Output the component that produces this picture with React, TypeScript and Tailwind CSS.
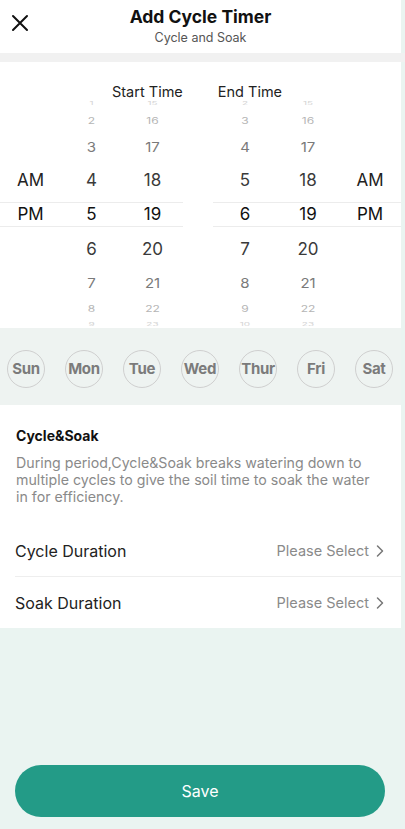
import React from "react";

type Row = { h: number; size: number; color: string; scale: string };

const ROWS: Row[] = [
  { h: 14, size: 10, color: "text-[#d4d4d4]", scale: "scale-y-[0.45]" },
  { h: 21, size: 12, color: "text-[#b5b5b5]", scale: "scale-y-[0.7]" },
  { h: 32, size: 15, color: "text-[#7a7a7a]", scale: "scale-y-[0.9]" },
  { h: 34, size: 17, color: "text-[#3a3a3a]", scale: "scale-y-100" },
  { h: 34, size: 17, color: "text-[#111]", scale: "scale-y-100" },
  { h: 36, size: 17, color: "text-[#3a3a3a]", scale: "scale-y-100" },
  { h: 32, size: 15, color: "text-[#7a7a7a]", scale: "scale-y-[0.9]" },
  { h: 20, size: 12, color: "text-[#b5b5b5]", scale: "scale-y-[0.7]" },
  { h: 9, size: 10, color: "text-[#d4d4d4]", scale: "scale-y-[0.45]" },
];

const sizeCls: Record<number, string> = {
  10: "text-[10px]",
  12: "text-[12px]",
  15: "text-[15px]",
  17: "text-[17px]",
};

function Wheel({ items, width }: { items: string[]; width: string }) {
  return (
    <div className={`flex flex-col ${width}`}>
      {ROWS.map((r, i) => (
        <div
          key={i}
          style={{ height: r.h }}
          className="flex items-center justify-center overflow-hidden"
        >
          <span className={`${sizeCls[r.size]} ${r.color} ${r.scale} leading-none`}>
            {items[i]}
          </span>
        </div>
      ))}
    </div>
  );
}

function AmPm({ width }: { width: string }) {
  return (
    <div className={`flex flex-col ${width}`}>
      <div className="h-[67px]" />
      <div className="h-[34px] flex items-center justify-center text-[17px] text-[#222] leading-none">AM</div>
      <div className="h-[34px] flex items-center justify-center text-[17px] text-[#111] leading-none">PM</div>
    </div>
  );
}

const days = ["Sun", "Mon", "Tue", "Wed", "Thur", "Fri", "Sat"];

function Chevron() {
  return (
    <svg className="ml-[7px] mr-[17px]" width="8" height="14" viewBox="0 0 8 14" fill="none" stroke="#777" strokeWidth="1.5" strokeLinecap="round" strokeLinejoin="round">
      <path d="M1.5 2 L6.5 7 L1.5 12" />
    </svg>
  );
}

export default function App() {
  return (
    <div
      className="w-[405px] h-[829px] bg-[#eaf4f1] flex flex-col overflow-hidden"
      style={{ fontFamily: "Inter, 'Noto Sans', sans-serif" }}
    >
      {/* Header */}
      <div className="h-[53px] bg-white mr-[4px] relative flex flex-col items-center">
        <svg
          className="absolute left-[11px] top-[14px]"
          width="18"
          height="18"
          viewBox="0 0 18 18"
          fill="none"
          stroke="#111"
          strokeWidth="2"
          strokeLinecap="round"
        >
          <path d="M2 2 L16 16 M16 2 L2 16" />
        </svg>
        <div className="mt-[5px] text-[17.5px] font-bold text-[#111] leading-[24px]">Add Cycle Timer</div>
        <div className="mt-[1px] text-[12.5px] text-[#555] leading-[16px]">Cycle and Soak</div>
      </div>
      <div className="h-[9px] bg-[#f1f1f1]" />

      {/* Picker */}
      <div className="h-[266px] bg-white mr-[4px] flex flex-col overflow-hidden">
        <div className="h-[37px] flex items-end text-[14.5px] text-[#222] leading-none">
          <span className="ml-[112px]">Start Time</span>
          <span className="ml-[35px]">End Time</span>
        </div>
        <div className="flex -mt-[3px]">
          {/* Left group */}
          <div className="w-[183px] flex relative">
            <div className="absolute left-0 right-0 top-[106px] h-[25px] border-y border-[#ececec]" />
            <AmPm width="w-[61px]" />
            <Wheel width="w-[61px]" items={["1", "2", "3", "4", "5", "6", "7", "8", "9"]} />
            <Wheel width="w-[61px]" items={["15", "16", "17", "18", "19", "20", "21", "22", "23"]} />
          </div>
          <div className="w-[32px]" />
          {/* Right group */}
          <div className="flex-1 flex relative">
            <div className="absolute left-0 right-0 top-[106px] h-[25px] border-y border-[#ececec]" />
            <Wheel width="w-[64px]" items={["2", "3", "4", "5", "6", "7", "8", "9", "10"]} />
            <Wheel width="w-[62px]" items={["15", "16", "17", "18", "19", "20", "21", "22", "23"]} />
            <AmPm width="w-[62px]" />
          </div>
        </div>
      </div>

      {/* Days */}
      <div className="h-[77px] bg-[#eef3f1] mr-[4px] flex items-center justify-between pl-[7px] pr-[8px] pt-[5px]">
        {days.map((d) => (
          <div
            key={d}
            className="w-[38px] h-[38px] rounded-full border border-[#cfcfcf] flex items-center justify-center text-[15px] font-bold text-[#7b7b7b] tracking-[-0.3px]"
          >
            {d}
          </div>
        ))}
      </div>

      {/* Cycle & Soak */}
      <div className="bg-white mr-[4px] h-[223px] flex flex-col">
        <div className="pl-[16px] pr-[22px] pt-[22px]">
          <div className="text-[14px] font-bold text-[#111] leading-[18px]">Cycle&amp;Soak</div>
          <div className="mt-[9px] text-[14.2px] text-[#8a8a8a] leading-[17px]">
            During period,Cycle&amp;Soak breaks watering down to multiple cycles to give the soil time to soak the water in for efficiency.
          </div>
        </div>
        <div className="mt-[21px] ml-[15px] h-[51px] flex items-center border-b border-[#eeeeee]">
          <span className="text-[16px] text-[#222] flex-1">Cycle Duration</span>
          <span className="text-[14.5px] text-[#8a8a8a]">Please Select</span>
          <Chevron />
        </div>
        <div className="ml-[15px] h-[51px] flex items-center">
          <span className="text-[16px] text-[#222] flex-1">Soak Duration</span>
          <span className="text-[14.5px] text-[#8a8a8a]">Please Select</span>
          <Chevron />
        </div>
      </div>

      <div className="flex-1" />
      <div className="px-[15px] pb-[12px] pr-[20px]">
        <div className="h-[52px] rounded-full bg-[#239b87] flex items-center justify-center text-white text-[16px]">
          Save
        </div>
      </div>
    </div>
  );
}
